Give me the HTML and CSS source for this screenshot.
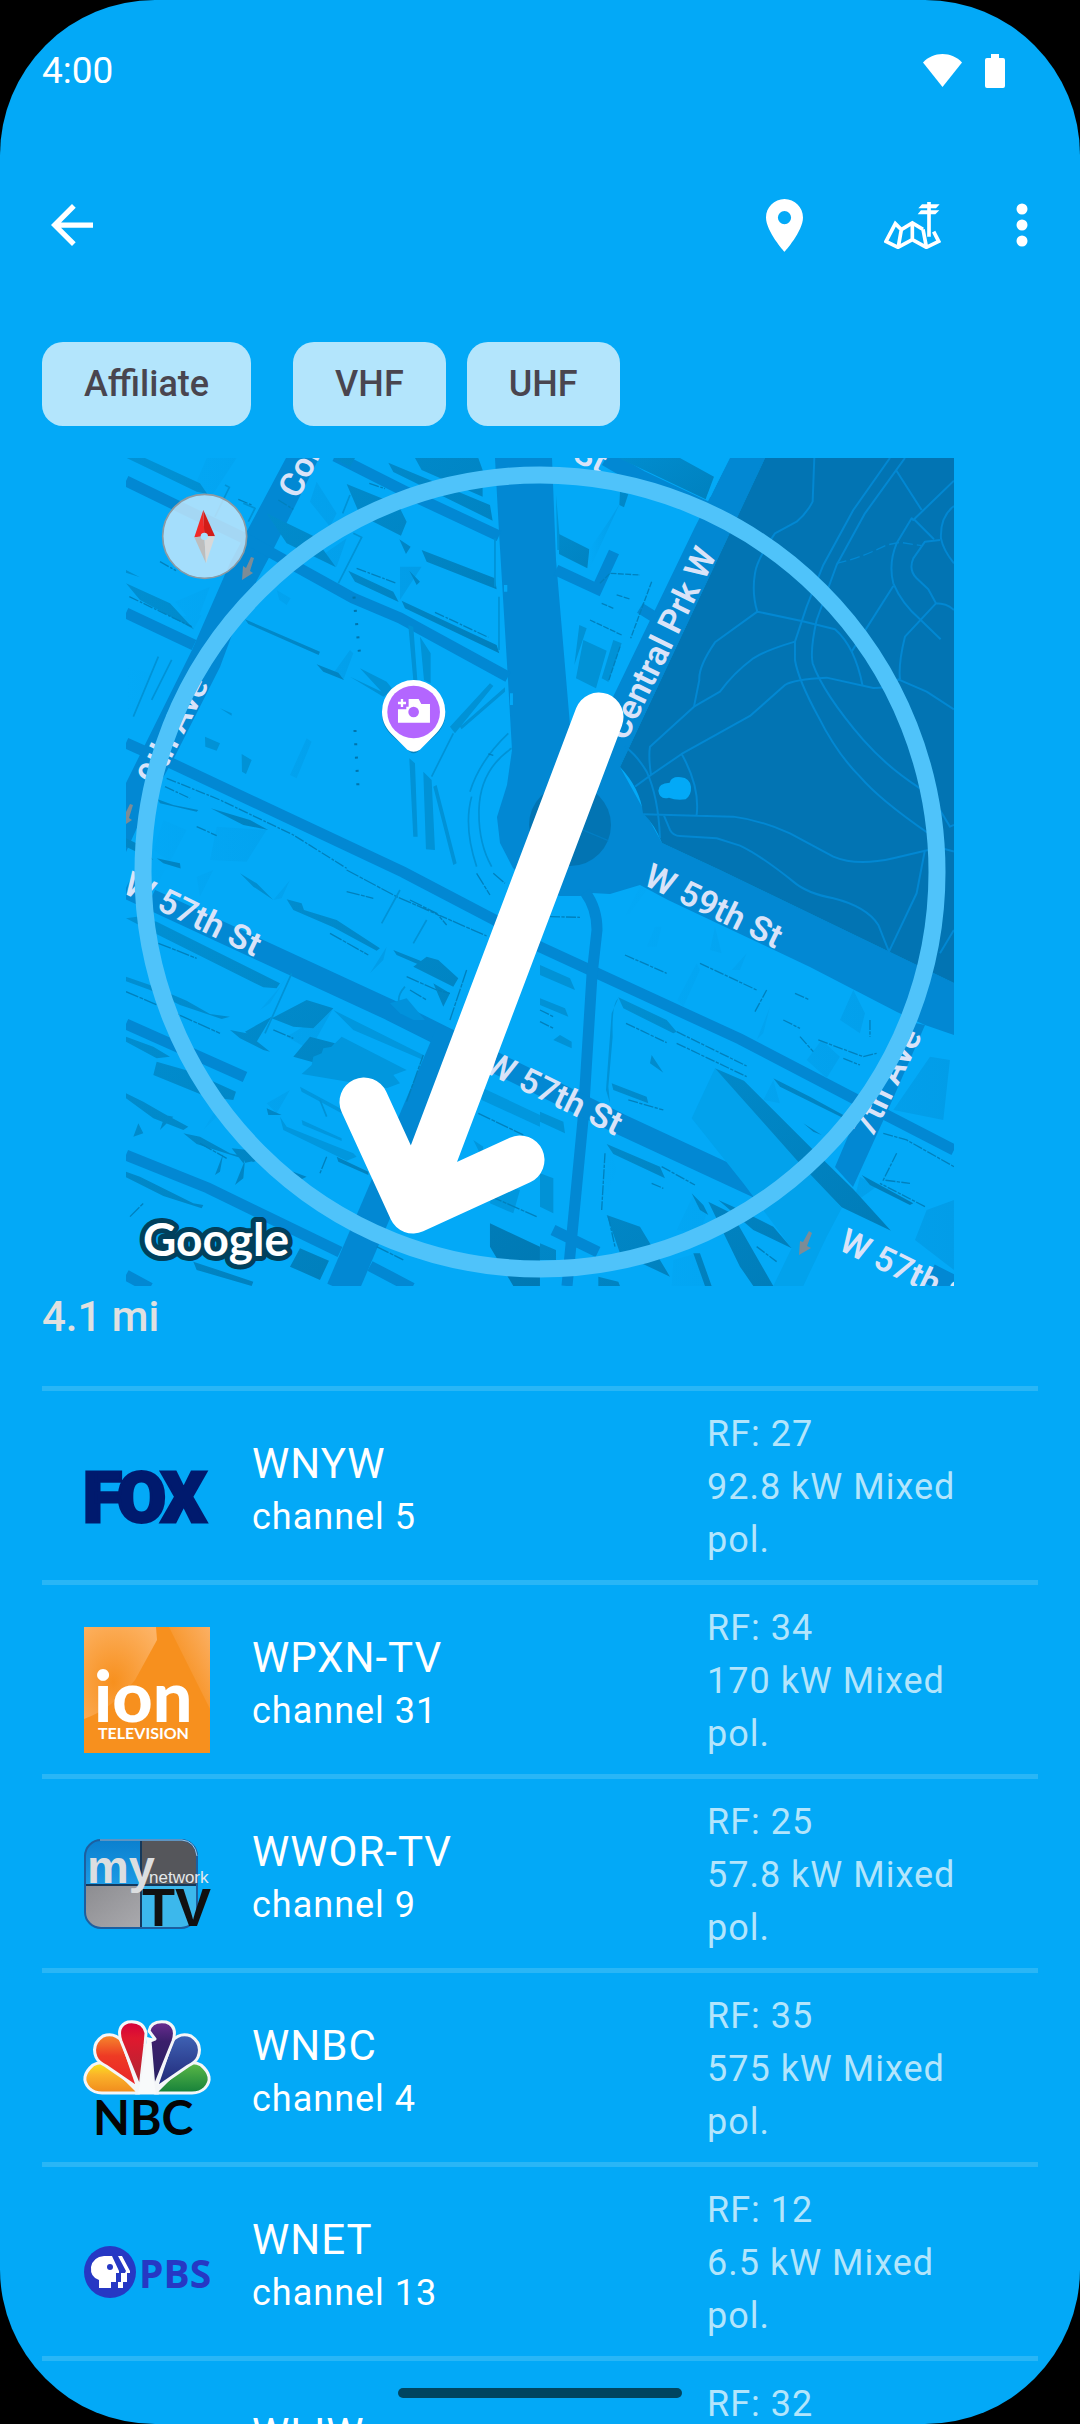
FILE: index.html
```html
<!DOCTYPE html>
<html lang="en">
<head>
  <meta charset="UTF-8" />
  <meta name="viewport" content="width=device-width, initial-scale=1.0"/>
  <title>TV Towers</title>
  <link rel="stylesheet" href="styles.css">
</head>
<body>
  <div class="screen">
    <div class="status-bar">
      <span class="clock">4:00</span>
      <svg width="39" height="33" viewBox="0 0 39 33"><path d="M19.500 33 0 8.500C5 3 12 0 19.500 0S34 3 39 8.500z" fill="#fff"/></svg>
      <svg width="20" height="34" viewBox="0 0 20 34"><path d="M6 0h8v4h4a2 2 0 0 1 2 2v26a2 2 0 0 1-2 2H2a2 2 0 0 1-2-2V6a2 2 0 0 1 2-2h4z" fill="#fff"/></svg>
    </div>

    <header class="app-bar">
      <button class="icon-btn back" aria-label="Back">
        <svg width="42" height="42" viewBox="4 4 16 16"><path d="M20 11H7.830l5.590-5.590L12 4l-8 8 8 8 1.410-1.410L7.830 13H20z" fill="#fff"/></svg>
      </button>
      <button class="icon-btn" aria-label="Location">
        <svg width="37" height="53" viewBox="5 2 14 20"><path d="M12 2C8.130 2 5 5.130 5 9c0 5.250 7 13 7 13s7-7.750 7-13c0-3.870-3.130-7-7-7zm0 9.500a2.500 2.500 0 1 1 0-5 2.500 2.500 0 0 1 0 5z" fill="#fff"/></svg>
      </button>
      <button class="icon-btn" aria-label="Tower map">
        <svg width="57" height="48" viewBox="70 60 171 144" fill="none" stroke="#fff" stroke-width="11">
          <path d="M187 145 155 126 122 146 104 128 76 181 112 199 155 176 197 199 234 181 219 152M122 146 113 197M155 126V177M187 145 197 197"/>
          <path d="M205 63V167"/>
          <path d="M184 70h53l-11 12h-53zM181 88h55l-12 12h-53z" fill="#fff" stroke="none"/>
        </svg>
      </button>
      <button class="icon-btn more" aria-label="More options">
        <svg width="12" height="44" viewBox="0 0 12 44" fill="#fff"><circle cx="6" cy="6" r="5.500"/><circle cx="6" cy="22" r="5.500"/><circle cx="6" cy="38" r="5.500"/></svg>
      </button>
    </header>

    <main>
      <div class="chips">
        <button class="chip affiliate">Affiliate</button>
        <button class="chip">VHF</button>
        <button class="chip">UHF</button>
      </div>

      <svg class="map" viewBox="126 458 828 828">
        <defs>
          <linearGradient id="shade" x1="0" y1="0" x2="1" y2="1"><stop offset="0" stop-color="#0192d6"/><stop offset="1" stop-color="#0079b4"/></linearGradient>
          <linearGradient id="wall" x1="0" y1="0" x2="1" y2="0"><stop offset="0" stop-color="#03a9f7"/><stop offset="1" stop-color="#029de8"/></linearGradient>
        </defs>

        <!-- streets -->
        <g fill="#0288d3">
          <path d="M495 458 499 532 508 680 512 750 507 785 497 817 500 843 513 868 535 890 560 896 580 896 592 893 610 894 640 885 668 900 810 967 897 1012 925 1025 954 1035V983L720 870 662 843 620 767 765 458H730L695 527 613 697 570 725 556 560 552 458z"/>
          <path d="M286 458H319L273 550 257 580 233 632 220 667 173 760 145 810 126 852V783L192 650 230 563z"/>
          <path d="M925 1025 888 1110 853 1187 835 1167 872 1080 900 1020zM798 1257 808 1272 802 1286H785z"/>
        </g>
        <g fill="none" stroke="#0288d3" stroke-width="11">
          <path d="M126 481 250 541 353 598 400 618 508 677M126 613 194 645M126 743 173 764 403 872 493 919 540 947 740 1039 857 1100 954 1150"/>
          <path d="M335 456 420 499 499 536M556 570 597 589 614 552M640 608 656 618"/>
          <path d="M606 458 640 478 712 512" stroke-width="16"/>
          <path d="M585 892Q597 908 597 930L592 975 583 1120 567 1286M553 1230 598 1252M126 1024 245 1077M126 1155 208 1188 340 1252M370 1266 412 1288M126 1275 150 1288"/>
          <path d="M126 888 260 950 390 1010 490 1060 620 1124 758 1188 M930 1274 954 1286" stroke-width="21"/>
          <path d="M453 1030 342 1290" stroke-width="32"/>
        </g>

        <!-- Central Park -->
        <g fill="#0274b3">
          <path d="M765 458H954V983L720 870 662 843Q655 825 643 813 640 788 620 767z"/>
          <circle cx="570" cy="825" r="41"/>
        </g>
        <g transform="translate(540 450) scale(.3333)" fill="none" stroke="#0288d3" stroke-width="6" stroke-linejoin="round">
          <path d="M823 24 818 155Q800 190 770 215L705 250Q650 330 645 370 635 430 652 485L785 513 885 538Q945 590 968 708M652 485 525 577Q475 650 478 690L462 770"/>
          <path d="M1050 24 940 180 850 345 800 470 765 575V630Q775 690 835 800 890 910 960 980 1020 1050 1165 1150M1095 24 975 190 890 345 830 510Q810 600 818 640 850 730 970 870 1040 950 1140 1015"/>
          <path d="M765 575Q680 600 640 625 580 670 540 725L462 770 330 890Q325 920 333 975L285 1010M333 975 425 912 630 798 735 705Q760 688 860 683L1000 714Q1060 715 1075 688L1160 725 1242 778M255 890Q290 915 320 965 355 1040 360 1165M425 912Q480 1010 470 1095M310 1093 580 1100Q660 1110 750 1150L880 1220Q950 1250 1060 1225L1165 1200M372 1097 390 1140Q400 1158 420 1158L530 1165 600 1187Q660 1215 760 1295 800 1330 880 1345 980 1370 1015 1425L1047 1505 1130 1330 1155 1200"/>
          <path d="M1068 60 1145 180M1242 92 1120 210 1115 205 1070 280Q1045 340 1060 400 1085 460 1140 508L1202 568M1122 208 1182 268M1200 270 1155 275 1120 325Q1105 360 1130 385L1165 418 1188 460 1095 560Q1075 640 1080 688M1188 460Q1220 460 1242 480M1242 168Q1200 200 1203 265 1210 300 1242 340M1060 408 935 605M1200 1080 1230 1130 1242 1125M1170 1185 1242 1205M1242 1440 1200 1510"/>
          <path d="M890 340Q960 325 1040 285L1080 277 1145 287" stroke-dasharray="30 12" stroke-width="4"/>
          <path d="M128 1140 205 1172" stroke-width="4" opacity=".5"/>
          <path d="M355 1022q0-22 34-24 6-20 34-16 26 2 30 28 2 24-16 38-30 4-50-5-28 8-32-21z" fill="#03a9f7" stroke="none"/>
        </g>

        <!-- buildings, north west -->
        <g transform="translate(120 450) scale(.3333)">
          <g fill="url(#wall)">
            <path d="M260 24h90l-85 130-35-60zM590 95 650 190 630 230 570 155zM680 265 650 350 600 320zM155 500 245 495 220 540zM18 650 95 670 30 800 18 800zM165 455 270 410 225 530zM470 420 512 445 500 465 478 450zM290 1130 440 1140 380 1235 270 1230zM130 1110 200 1140 150 1235 100 1200zM690 600 700 610 670 690 640 670zM560 865 575 875 530 985 510 975zM840 350 905 350 840 450z"/>
          </g>
          <g fill="url(#shade)">
            <path d="M20 24H75L240 100 262 132 230 125zM440 190 580 258 648 352 500 280zM680 102 835 165 860 215 843 257 720 195zM885 24H1075L1088 60V140L905 60zM805 38 1110 165 1118 212 820 66zM905 300 1125 385 1130 418 920 335zM685 362 820 425 836 456 705 395zM845 452 1130 585 1138 610 855 475zM375 508 600 605 596 615 385 522zM590 643 655 668 672 690 610 665zM18 400 150 460 222 538 60 450zM640 24H705L690 52zM838 268 872 290 858 312zM868 362 900 395 890 405zM272 1075 390 1110 445 1140 370 1125zM113 1048 160 1065 235 1080 230 1085 120 1060zM18 360 60 382 18 368zM18 1165 60 1185 100 1230 18 1190zM110 1225 180 1240 182 1256 130 1240z"/>
          </g>
          <g fill="#0192d6">
            <path d="M865 525 880 530 892 690H880zM900 560 932 610V700L912 690zM868 925 885 940 893 1160H880zM910 965 935 990 945 1200 918 1198zM940 1010 950 1005 1010 1240 1000 1245zM720 655 800 695 820 720 790 740 690 680 785 725zM300 775 335 790V797zM365 912 395 930 378 972 366 965zM255 860 300 880 290 902 256 890zM990 830 1110 700 1120 708 1005 850zM1020 830 1155 712V725L1025 838z"/>
          </g>
          <path d="M315 105 328 112 285 200M370 160 405 175 385 215M690 135 668 190M655 400 725 262 700 250M1055 1040Q1030 1130 1070 1250M1175 895Q1080 960 1077 1080 1075 1180 1115 1250M1050 1025Q1080 930 1165 850M1000 850 935 980M115 620 40 800M155 630 95 750M1125 265V410M1137 440V600" fill="none" stroke="#0192d6" stroke-width="5"/>
          <path d="M475 150 520 178M355 148 395 165M140 985 300 1050 520 1155 680 1255M135 1010 210 1045M945 487 1105 562M710 355 830 400M230 1130 290 1157M28 440 215 530M1105 912 1120 916M748 100 795 116M120 335 168 362" fill="none" stroke="#0180bd" stroke-width="4" stroke-dasharray="30 5 8 4"/>
          <path d="M702 440 718 605M705 840 715 1030" fill="none" stroke="#0174ac" stroke-width="9" stroke-dasharray="6 34"/>
          <path d="M1152 405h10v20h-10zM1170 730h9v35h-9z" fill="#03a9f7"/>
        </g>

        <!-- buildings, north east -->
        <g transform="translate(540 450) scale(.3333)">
          <path d="M235 24 420 24 522 80 497 148 330 68zM57 252 148 298 142 355 57 312zM240 125 265 132 252 172 238 165z" fill="url(#shade)"/>
          <path d="M240 160 150 355 148 298 205 215z" fill="url(#wall)"/>
          <path d="M118 525 140 535 103 645zM130 570 200 602 168 715 108 685zM220 570 245 580 205 695 185 685zM48 135 58 250V300H52z" fill="#0192d6"/>
          <path d="M500 140 560 24H568L512 140zM470 24 530 50M455 30 515 48" fill="#03a9f7"/>
          <path d="M335 395 272 565M240 590 205 695M150 510 245 555M185 460 220 475M230 435 270 447M180 400 210 370 300 375" fill="none" stroke="#0180bd" stroke-width="4" stroke-dasharray="18 4"/>
        </g>

        <!-- buildings, south west -->
        <g transform="translate(120 870) scale(.3333)">
          <g fill="url(#wall)">
            <path d="M85 0H135L95 80 60 60zM230 20 280 0 240 80zM510 305 480 350 420 420 450 400zM640 415 570 540 500 500zM320 665 250 780 300 730zM440 700 510 660 470 730zM800 230 750 310 790 270zM510 30 460 90 485 85z"/>
          </g>
          <g fill="url(#shade)">
            <path d="M50 140 110 155 480 340 470 355 430 352 115 195 18 145zM18 320 90 345 200 392 270 432 330 440 305 447 180 405 90 360 18 334zM455 445 560 390 640 415 580 475 520 470zM375 485 455 440 410 515zM570 500 645 520 590 580 520 560zM18 500 100 530 150 560 110 565 18 515zM110 575 215 605 348 665 340 690 260 680 100 615zM330 480 380 490 450 545 430 540 360 505zM18 670 70 695 130 730 205 770 190 780 100 745 18 685zM190 790 240 800 330 850 415 870 400 876 230 822zM335 835 385 840 415 870 370 880zM18 905 60 920 110 945 220 1000 250 1005 245 1015 130 978 18 922zM540 1135 627 1172 600 1230 510 1190zM220 1175 400 1235 395 1248 230 1200zM1110 1060 1260 1130V1248H1180L1110 1130zM70 790 40 800 55 760zM160 740 120 780 135 735zM310 850 285 915 300 905zM375 870 345 945 370 925zM435 900 520 905 560 920 540 930zM650 860 745 905V915L655 875zM920 260 955 270 1015 325 1000 350 880 290zM940 340 990 370 970 410zM440 715 485 735 445 735zM360 10 410 40 460 90 400 50zM500 88 545 100 552 120 650 150 780 235 770 242 640 172 520 120zM820 240 920 280 915 292 830 255z"/>
          </g>
          <g fill="#0197de">
            <path d="M665 500 860 600 820 615 840 640 800 655 545 612 575 585 580 560 605 550 610 535 635 530zM640 420 910 555V570L700 480zM540 650 670 720 665 730 545 665zM545 750 665 805V813L548 765zM1080 650 1260 735V770L1085 690zM1060 810 1090 830 1085 860zM480 740 500 770 700 850 710 860 680 872 490 780zM1120 940 1200 960 1180 1030 1110 1000z"/>
          </g>
          <path d="M680 0 830 80 1100 198M115 220 230 265M18 365 100 400 300 490M460 480 520 505M630 190 745 255M240 820 320 865M620 860 600 910M770 1130 850 1170M1000 930 1250 1040M1075 730 1210 795M680 65 760 85M870 90 950 130 980 165M860 320 950 360 990 370M870 360 920 390M30 1040 70 1000M860 695 910 555M990 450 1040 300M1070 10 1110 75M1120 10 1155 40" fill="none" stroke="#0180bd" stroke-width="4" stroke-dasharray="40 4 12 3"/>
          <path d="M855 350Q815 395 860 425M600 690 620 740M515 310 435 490M840 60 785 160M920 150 880 220" fill="none" stroke="#0192d6" stroke-width="5"/>
          <path d="M810 400 860 385 915 450 880 450 840 430z" fill="#0192dc"/>
        </g>

        <!-- buildings, south east -->
        <g transform="translate(540 870) scale(.3333)">
          <g fill="url(#wall)">
            <path d="M300 50 255 138 270 130 320 60zM470 280 412 390 430 410 480 300zM345 170 320 230 350 230 365 170zM525 170 510 240 545 250zM620 250 575 300 600 300zM700 630 670 690 720 700zM690 410 650 510 670 490zM940 360 900 450 960 490 975 430zM845 510 800 570 860 625 900 560zM1170 560 1230 570 1210 750 1060 720zM960 920 1010 950 940 1000zM1160 1020 1242 990V1200L1125 1110zM460 975 410 1080 480 1090 500 1030zM470 1150 400 1170 395 1248H510zM210 830 185 1020 230 900z"/>
          </g>
          <path d="M455 745 525 595 780 870 820 910 905 1015 860 1100 790 1248H700L755 1135 610 940z" fill="#02a2ec"/>
          <g fill="url(#shade)">
            <path d="M525 595 612 632 820 840 940 958 1053 1082 905 1012 770 870zM235 382 380 450 410 485 400 490 250 415zM215 640 320 680 325 700 220 660zM200 822 360 890 375 925 220 852zM455 970 490 1005 505 1035 480 1020zM505 995 575 1030 700 1248H640L600 1190zM535 990 580 1010 700 1070 755 1135 640 1080zM200 1035 300 1070 390 1220 240 1150zM0 1120 48 1140V1170H0zM700 625 810 680 910 735 905 742 720 650zM965 915 1120 1000 1110 1005 990 945zM790 760 845 795 820 785zM335 555 370 608 330 580zM480 1150 515 1248H495L460 1150zM175 1220 235 1235 240 1248H175z"/>
          </g>
          <path d="M235 385Q215 400 218 500L205 650 210 700 198 660 215 430zM0 285 90 325 105 360 0 315zM0 385 75 415 85 440 0 405zM40 510 60 495 95 515V535zM0 725 70 755 75 790 0 755zM0 910 40 925V1030L0 1010z" fill="#0192d6"/>
          <path d="M255 255 380 310M258 460 380 518M410 520 620 620M410 485 620 588M480 280 650 360M30 140 120 142M365 890 465 945M335 940 370 955M1030 790 1100 810 1242 890M1070 850 1030 930 1110 940M1155 1010 1020 940M765 370 805 388M730 450 780 475M780 500 820 545M835 510 970 560 1010 550M910 565 960 585M650 1130 710 1175M0 420 40 440M0 455 40 475M265 690 370 720M195 850 185 1020M205 1040 225 1130M645 425 680 360M990 450V500" fill="none" stroke="#0180bd" stroke-width="4" stroke-dasharray="30 4 10 4"/>
        </g>

        <!-- one way arrows -->
        <g fill="#7d8c96">
          <path d="M251 557 254 558 250 571 253 573 242 580 243 566 246 568z"/>
          <path d="M130 804 133 805 129 818 132 820 126 824V812zM809 1231 812 1233 807 1246 811 1248 799 1255 800 1241 803 1242z"/>
        </g>

        <g class="street">
          <text transform="translate(298 500) rotate(-63)">Col</text>
          <text transform="translate(571 460) rotate(26)">St</text>
          <text transform="translate(626 742) rotate(-64)">Central Prk W</text>
          <text transform="translate(157 787) rotate(-63)">9th Ave</text>
          <text transform="translate(121 892) rotate(26)">W 57th St</text>
          <text transform="translate(642 884) rotate(26)">W 59th St</text>
          <text transform="translate(482 1071) rotate(26)">W 57th St</text>
          <text transform="translate(837 1249) rotate(26)">W 57th St</text>
          <text transform="translate(872 1139) rotate(-64)">7th Ave</text>
        </g>

        <!-- compass -->
        <g transform="translate(120 450) scale(.3333)">
          <circle cx="254" cy="259" r="126" fill="#cdebfc" fill-opacity=".8" stroke="#8d9aa3" stroke-width="5"/>
          <path d="M250 180 223 262 253 259z" fill="#f02a28"/>
          <path d="M250 180 285 259 253 259z" fill="#d31c18"/>
          <path d="M223 262 258 340 253 259z" fill="#bdbdbd"/>
          <path d="M285 259 258 340 253 259z" fill="#d8d8d8"/>
          <circle cx="253" cy="259" r="11" fill="#a8e0fd"/>
        </g>

        <!-- photo spot -->
        <g transform="translate(120 450) scale(.3333)">
          <path d="M881 698a95 95 0 0 1 95 95c0 60-65 85-78 108q-17 18-34 0c-13-23-78-48-78-108a95 95 0 0 1 95-95z" fill="#014a6c" opacity=".4"/>
          <path d="M881 690a95 95 0 0 1 95 95c0 32-14 52-34 72l-42 42q-19 12-38 0l-42-42c-20-20-34-40-34-72a95 95 0 0 1 95-95z" fill="#fff"/>
          <circle cx="881" cy="786" r="79" fill="#b366ff"/>
          <path d="M866 747h30l8 15h26v56h-96v-40h25v-8h7z" fill="#fff"/>
          <path d="M846 747v24M834 759h24" stroke="#fff" stroke-width="7"/>
          <circle cx="881" cy="786" r="16" fill="#b366ff"/>
        </g>

        <text class="google" x="143" y="1256">Google</text>

        <!-- bearing to the tower -->
        <circle cx="540" cy="872" r="397" fill="none" stroke="#4fc3fa" stroke-width="17"/>
        <path d="M599 717 413 1209M364 1102 413 1209 520 1160" fill="none" stroke="#fff" stroke-width="49" stroke-linecap="round" stroke-linejoin="round"/>
      </svg>

      <p class="distance">4.1 mi</p>

      <ul class="stations">
        <li class="station">
          <svg class="logo" viewBox="0 0 126 126">
            <text class="fox" x="-1 33 77" y="89">FOX</text>
          </svg>
          <div class="name"><h2>WNYW</h2><p>channel 5</p></div>
          <div class="rf">RF: 27<br>92.8 kW Mixed pol.</div>
        </li>
        <li class="station">
          <svg class="logo" viewBox="0 0 126 126">
            <defs>
              <radialGradient id="ionL" cx=".4" cy=".6" r=".8"><stop offset="0" stop-color="#f7901e"/><stop offset="1" stop-color="#fdb467"/></radialGradient>
              <linearGradient id="ionR" x1="0" y1="1" x2="1" y2="0"><stop offset=".3" stop-color="#f7901e"/><stop offset="1" stop-color="#fbb064"/></linearGradient>
            </defs>
            <path d="M0 0h126v126H0z" fill="#f7901e"/>
            <path d="M0 0h72l1 13-22 40Q28 82 0 92z" fill="url(#ionL)"/>
            <path d="M85 0h41v82z" fill="url(#ionR)"/>
            <text class="ion" x="10" y="95">ion</text>
            <text class="ion-sub" x="14" y="112">TELEVISION</text>
          </svg>
          <div class="name"><h2>WPXN-TV</h2><p>channel 31</p></div>
          <div class="rf">RF: 34<br>170 kW Mixed pol.</div>
        </li>
        <li class="station">
          <svg class="logo" viewBox="0 0 126 126">
            <defs>
              <clipPath id="tile"><rect x="1" y="19" width="112" height="88" rx="16"/></clipPath>
              <linearGradient id="blu" x1="0" y1="0" x2="0" y2="1"><stop offset="0" stop-color="#0a7fce"/><stop offset="1" stop-color="#1c9be6"/></linearGradient>
              <linearGradient id="gry" x1="0" y1="0" x2="1" y2="1"><stop offset="0" stop-color="#8c8c90"/><stop offset="1" stop-color="#aaaaae"/></linearGradient>
            </defs>
            <g clip-path="url(#tile)">
              <path d="M0 18h57v46H0z" fill="url(#blu)"/>
              <path d="M57 18h57v46H57z" fill="#55565b"/>
              <path d="M0 64h57v44H0z" fill="url(#gry)"/>
              <path d="M57 64h57v44H57z" fill="#3cb8ec"/>
              <path d="M57 18v90M0 64h114" stroke="#14395c" stroke-width="2"/>
            </g>
            <rect x="1" y="19" width="112" height="88" rx="16" fill="none" stroke="#1d5f9f" stroke-width="2"/>
            <path d="M16 19h82q13 1 15 16" fill="none" stroke="#9fc9e6" stroke-width="1"/>
            <text class="my-tv" x="58" y="105">TV</text>
            <text class="my" x="3" y="62">my</text>
            <text class="my-net" x="65" y="62">network</text>
          </svg>
          <div class="name"><h2>WWOR-TV</h2><p>channel 9</p></div>
          <div class="rf">RF: 25<br>57.8 kW Mixed pol.</div>
        </li>
        <li class="station">
          <svg class="logo" viewBox="0 0 126 126">
            <defs>
              <linearGradient id="pk1" x1="0" y1="0" x2="0" y2="1"><stop offset="0" stop-color="#f8e71c"/><stop offset=".4" stop-color="#fbb32a"/><stop offset="1" stop-color="#f08a1d"/></linearGradient>
              <linearGradient id="pk2" x1="0" y1="0" x2="0" y2="1"><stop offset="0" stop-color="#f58a2c"/><stop offset=".4" stop-color="#ee3a24"/><stop offset="1" stop-color="#e8202a"/></linearGradient>
              <linearGradient id="pk3" x1="0" y1="0" x2="0" y2="1"><stop offset="0" stop-color="#d4003c"/><stop offset=".25" stop-color="#e0182e"/><stop offset="1" stop-color="#a82a34"/></linearGradient>
              <linearGradient id="pk4" x1="0" y1="0" x2="0" y2="1"><stop offset="0" stop-color="#6a2c91"/><stop offset=".3" stop-color="#3b1f6b"/><stop offset="1" stop-color="#262262"/></linearGradient>
              <linearGradient id="pk5" x1="0" y1="0" x2="0" y2="1"><stop offset="0" stop-color="#3f63b5"/><stop offset="1" stop-color="#1f2474"/></linearGradient>
              <linearGradient id="pk6" x1="0" y1="0" x2="0" y2="1"><stop offset="0" stop-color="#5cb947"/><stop offset="1" stop-color="#15803a"/></linearGradient>
            </defs>
            <g stroke="#f4f6f8" stroke-width="3" stroke-linejoin="round">
              <path d="M52 78 63 30 74 78z" fill="#f4f6f8"/>
              <path d="M55 78 31 54Q20 44 9 50-5 62 5 73 10 78 18 78z" fill="url(#pk1)"/>
              <path d="M71 78 95 54Q106 44 117 50 131 62 121 73 116 78 108 78z" fill="url(#pk6)"/>
              <path d="M54 73 38 26Q30 17 19 21 7 29 12 42 14 47 22 51z" fill="url(#pk2)"/>
              <path d="M72 73 88 26Q96 17 107 21 119 29 114 42 112 47 104 51z" fill="url(#pk5)"/>
              <path d="M56 73 37 26Q32 11 44 7 59 5 62 18L61 30z" fill="url(#pk3)"/>
              <path d="M70 73 89 26Q94 11 82 7 67 5 65 16L71 24 66 26z" fill="url(#pk4)"/>
            </g>
            <path d="M54 79 61 44 63 22 71 24 66 27 66 44 72 79z" fill="#f8fafb"/>
            <text class="nbc" x="9" y="120">NBC</text>
          </svg>
          <div class="name"><h2>WNBC</h2><p>channel 4</p></div>
          <div class="rf">RF: 35<br>575 kW Mixed pol.</div>
        </li>
        <li class="station">
          <svg class="logo" viewBox="0 0 126 126">
            <circle cx="26" cy="63" r="26" fill="#2638c4"/>
            <path d="M20 47h8l7 15v2h-3v9h-5v6H15v-8Q6 68 7 58 9 48 20 47z" fill="#fff"/>
            <path d="M34 47h4l8 15v2h-3v9h-4v6h-5v-6h3v-9h4l1-2z" fill="#fff"/>
            <circle cx="26" cy="58" r="3" fill="#2638c4"/>
            <text class="pbs" x="55" y="79">PBS</text>
          </svg>
          <div class="name"><h2>WNET</h2><p>channel 13</p></div>
          <div class="rf">RF: 12<br>6.5 kW Mixed pol.</div>
        </li>
        <li class="station">
          <div class="logo"></div>
          <div class="name"><h2>WLIW</h2></div>
          <div class="rf">RF: 32</div>
        </li>
      </ul>
    </main>

    <div class="nav-pill"></div>
  </div>
</body>
</html>
```

FILE: styles.css
```css
* {
  box-sizing: border-box;
}

body {
  margin: 0;
  background: #000;
  color: #fff;
  font-family: Roboto, sans-serif;
}

.screen {
  position: relative;
  height: 100vh;
  overflow: hidden;
  background: #03a9f7;
  border-radius: 155px;
}

.status-bar {
  display: flex;
  align-items: center;
  gap: 23px;
  height: 141px;
  padding: 0 75px 0 42px;
}

.clock {
  margin-right: auto;
  font-size: 37px;
}

.app-bar {
  display: flex;
  align-items: center;
  height: 168px;
  padding: 0 12px 0 8px;
}

.icon-btn {
  display: flex;
  align-items: center;
  justify-content: center;
  width: 128px;
  height: 126px;
  padding: 0;
  border: 0;
  background: none;
}

.icon-btn.back {
  margin-right: auto;
}

.icon-btn.more {
  width: 92px;
}

main {
  padding: 33px 42px 0;
}

.chips {
  display: flex;
  gap: 21px;
  margin-bottom: 32px;
}

.chip {
  height: 84px;
  padding: 0 42px;
  border: 0;
  border-radius: 21px;
  background: #b3e5fc;
  color: #49454f;
  font: 500 36px Roboto, sans-serif;
}

.chip.affiliate {
  margin-right: 21px;
}

.map {
  display: block;
  width: calc(100% - 168px);
  margin: 0 auto;
}

.street {
  fill: #d9e3f8;
  font-size: 34px;
  font-weight: 600;
}

.google {
  fill: #fff;
  stroke: #01405c;
  stroke-width: 10px;
  stroke-linejoin: round;
  paint-order: stroke;
  font: 700 46px Lato, sans-serif;
}

.distance {
  margin: 6px 0 44px;
  color: #e0e0e0;
  font-size: 42px;
  font-weight: 500;
  line-height: 50px;
}

.stations {
  margin: 0;
  padding: 0;
  list-style: none;
}

.station {
  display: flex;
  align-items: flex-start;
  min-height: 194px;
  padding: 0 42px;
  border-top: 5px solid #29b6f6;
  letter-spacing: 1px;
}

.logo {
  width: 126px;
  height: 126px;
  margin: 42px 42px 0 0;
  overflow: visible;
  letter-spacing: 0;
}

.name {
  flex: 1;
  padding-top: 46px;
}

.name h2 {
  margin: 0;
  font-size: 42px;
  font-weight: 400;
  line-height: 53px;
}

.name p {
  margin: 0;
  font-size: 36px;
  line-height: 54px;
}

.rf {
  width: 289px;
  padding: 17px 0 13px;
  color: #b3e5fc;
  font-size: 36px;
  line-height: 53px;
}

.fox {
  fill: #001a6e;
  stroke: #001a6e;
  stroke-width: 3px;
  font: 900 71px Roboto, sans-serif;
}

.ion {
  fill: #fff;
  font: 900 70px Lato, sans-serif;
}

.ion-sub {
  fill: #fff;
  font: 700 16px Lato, sans-serif;
}

.my {
  fill: #dcdee0;
  font: 700 47px "Liberation Sans", sans-serif;
}

.my-net {
  fill: #e4e8ea;
  font: 400 17px "Liberation Sans", sans-serif;
}

.my-tv {
  fill: #111;
  font: 700 54px "Liberation Sans", sans-serif;
}

.nbc {
  fill: #050505;
  font: 700 48px Lato, sans-serif;
}

.pbs {
  fill: #2638c4;
  font: 700 39px "Open Sans", sans-serif;
}

.nav-pill {
  position: absolute;
  bottom: 26px;
  left: 50%;
  width: 284px;
  height: 10px;
  margin-left: -142px;
  border-radius: 5px;
  background: #004560;
}
```
